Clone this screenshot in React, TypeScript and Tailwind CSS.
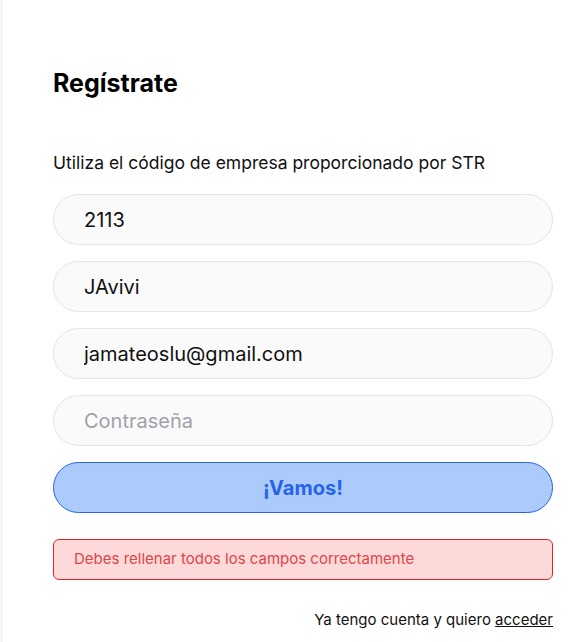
export default function App() {
  const inputs = [
    { value: "2113", placeholder: "Código de empresa" },
    { value: "JAvivi", placeholder: "Usuario" },
    { value: "jamateoslu@gmail.com", placeholder: "Email" },
    { value: "", placeholder: "Contraseña" },
  ];

  return (
    <div
      className="flex min-h-[642px] bg-white text-black"
      style={{ fontFamily: "Inter, 'Noto Sans', sans-serif" }}
    >
      <div className="w-[3px] shrink-0 bg-[#f4f4f5]" />

      <main className="ml-[50px] w-[500px] pt-[67px]">
        <h1 className="text-[25px] leading-8 font-bold">Regístrate</h1>

        <p className="mt-[50px] text-[17.5px] leading-7 text-[#111]">
          Utiliza el código de empresa proporcionado por STR
        </p>

        <form className="mt-[17px] flex flex-col gap-4">
          {inputs.map((field) => (
            <input
              key={field.placeholder}
              defaultValue={field.value}
              placeholder={field.placeholder}
              type={field.placeholder === "Contraseña" ? "password" : "text"}
              className="h-[51px] w-full rounded-full border border-[#e4e4e7] bg-[#fafafa] pl-[30px] text-xl text-[#111] outline-none placeholder:text-[#a1a1aa]"
            />
          ))}

          <button
            type="button"
            className="h-[51px] w-full rounded-full border border-[#2563eb] bg-[#adcbfa] text-xl font-bold text-[#2563eb]"
          >
            ¡Vamos!
          </button>
        </form>

        <div className="mt-[26px] flex h-[41px] items-center rounded-md border border-[#dc2626] bg-[#fdd9d9] pl-[20px] text-[15px] text-[#e0464a]">
          Debes rellenar todos los campos correctamente
        </div>

        <p className="mt-[29px] text-right text-[15px] leading-[22px] text-[#111]">
          Ya tengo cuenta y quiero{" "}
          <a href="#" className="underline">
            acceder
          </a>
        </p>
      </main>
    </div>
  );
}
